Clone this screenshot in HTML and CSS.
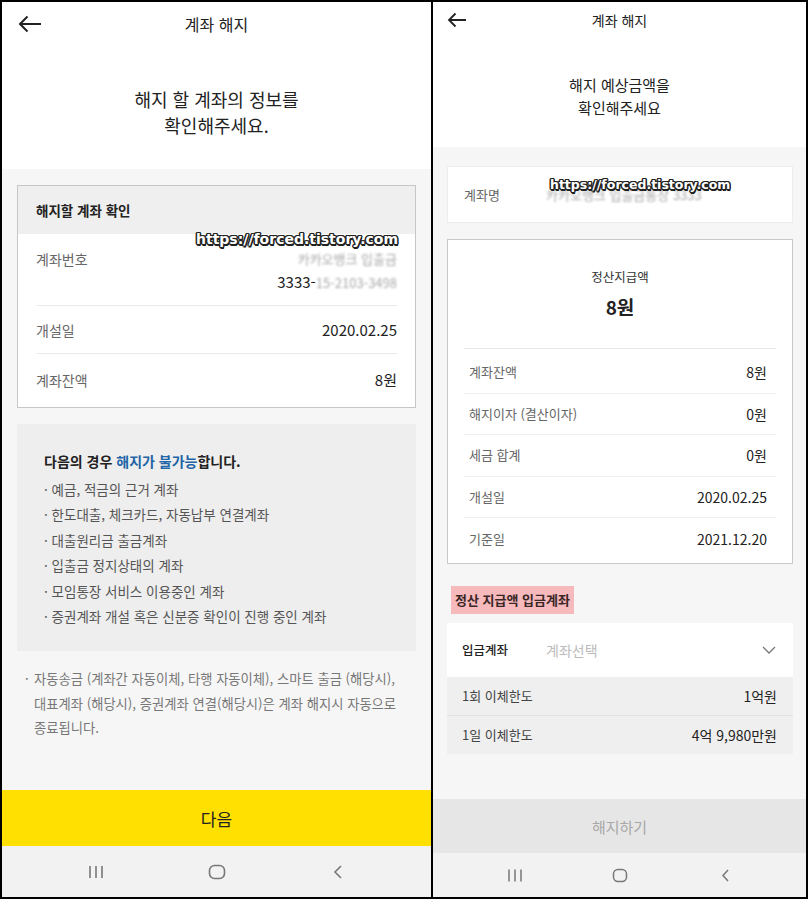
FILE: index.html
```
<!DOCTYPE html>
<html lang="ko">
<head>
<meta charset="UTF-8" />
<meta name="viewport" content="width=device-width, initial-scale=1.0"/>
<title>계좌 해지</title>
<link rel="stylesheet" href="styles.css">
</head>
<body>
<div class="frame">

  <!-- Step 1: account info -->
  <div class="phone phone-left">
    <header class="topbar">
      <svg class="back" width="24" height="18" viewBox="0 0 24 18"><path d="M23 9H2M9.5 1.5L2 9l7.5 7.5" fill="none" stroke="#222" stroke-width="2"/></svg>
      <h1>계좌 해지</h1>
      <span></span>
    </header>
    <div class="intro">해지 할 계좌의 정보를<br>확인해주세요.</div>

    <main class="content">
      <section class="card">
        <div class="card-head">해지할 계좌 확인</div>
        <div class="card-body">
          <div class="row row-top">
            <span class="label">계좌번호</span>
            <span class="value value-stack">
              <span class="blur">카카오뱅크 입출금</span>
              <span>3333-<span class="blur">15-2103-3498</span></span>
            </span>
          </div>
          <div class="row">
            <span class="label">개설일</span>
            <span class="value">2020.02.25</span>
          </div>
          <div class="row">
            <span class="label">계좌잔액</span>
            <span class="value">8원</span>
          </div>
        </div>
        <span class="watermark">https://forced.tistory.com</span>
      </section>

      <section class="notice">
        <h3>다음의 경우 <em>해지가 불가능</em>합니다.</h3>
        <ul>
          <li>예금, 적금의 근거 계좌</li>
          <li>한도대출, 체크카드, 자동납부 연결계좌</li>
          <li>대출원리금 출금계좌</li>
          <li>입출금 정지상태의 계좌</li>
          <li>모임통장 서비스 이용중인 계좌</li>
          <li>증권계좌 개설 혹은 신분증 확인이 진행 중인 계좌</li>
        </ul>
      </section>

      <p class="note"><span class="dot">·</span><span>자동송금 (계좌간 자동이체, 타행 자동이체), 스마트 출금 (해당시),<br>대표계좌 (해당시), 증권계좌 연결(해당시)은 계좌 해지시 자동으로<br>종료됩니다.</span></p>
    </main>

    <button class="cta cta-yellow">다음</button>
    <nav class="navbar">
      <svg width="16" height="16" viewBox="0 0 16 16"><path d="M2 2v12M8 2v12M14 2v12" stroke="#777" stroke-width="1.6"/></svg>
      <svg width="18" height="16" viewBox="0 0 18 16"><rect x="1.5" y="1.5" width="15" height="13" rx="5" fill="none" stroke="#777" stroke-width="1.6"/></svg>
      <svg width="12" height="16" viewBox="0 0 12 16"><path d="M9 2L3 8l6 6" fill="none" stroke="#777" stroke-width="1.6"/></svg>
    </nav>
  </div>

  <!-- Step 2: expected amount -->
  <div class="phone phone-right">
    <header class="topbar">
      <svg class="back" width="20" height="16" viewBox="0 0 20 16"><path d="M19 8H2M8.5 1.5L2 8l6.5 6.5" fill="none" stroke="#222" stroke-width="1.8"/></svg>
      <h1>계좌 해지</h1>
      <span></span>
    </header>
    <div class="intro">해지 예상금액을<br>확인해주세요</div>

    <main class="content">
      <section class="name-box">
        <span class="label">계좌명</span>
        <span class="blur">카카오뱅크 입출금통장 3333</span>
        <span class="watermark">https://forced.tistory.com</span>
      </section>

      <section class="payout">
        <div class="payout-top">
          <p class="payout-title">정산지급액</p>
          <p class="payout-amount">8원</p>
        </div>
        <div class="payout-rows">
          <div class="line"><span class="label">계좌잔액</span><span class="value">8원</span></div>
          <div class="line"><span class="label">해지이자 (결산이자)</span><span class="value">0원</span></div>
          <div class="line"><span class="label">세금 합계</span><span class="value">0원</span></div>
          <div class="line"><span class="label">개설일</span><span class="value">2020.02.25</span></div>
          <div class="line"><span class="label">기준일</span><span class="value">2021.12.20</span></div>
        </div>
      </section>

      <h2 class="mark">정산 지급액 입금계좌</h2>

      <div class="select">
        <span class="select-label">입금계좌</span>
        <span class="select-hint">계좌선택</span>
        <svg width="14" height="8" viewBox="0 0 14 8"><path d="M1 1l6 6 6-6" fill="none" stroke="#777" stroke-width="1.3"/></svg>
      </div>
      <div class="limits">
        <div class="limit"><span>1회 이체한도</span><span class="limit-val">1억원</span></div>
        <div class="limit"><span>1일 이체한도</span><span class="limit-val">4억 9,980만원</span></div>
      </div>
    </main>

    <button class="cta cta-off">해지하기</button>
    <nav class="navbar">
      <svg width="16" height="15" viewBox="0 0 16 15"><path d="M2 1.5v12M8 1.5v12M14 1.5v12" stroke="#777" stroke-width="1.5"/></svg>
      <svg width="16" height="15" viewBox="0 0 16 15"><rect x="1.5" y="1.5" width="13" height="12" rx="4.5" fill="none" stroke="#777" stroke-width="1.5"/></svg>
      <svg width="10" height="15" viewBox="0 0 10 15"><path d="M8 2L3 7.5 8 13" fill="none" stroke="#777" stroke-width="1.5"/></svg>
    </nav>
  </div>

</div>
</body>
</html>
```

FILE: styles.css
```
* {
  box-sizing: border-box;
}
body {
  margin: 0;
  font-family: "Noto Sans CJK KR", "Noto Sans", sans-serif;
  color: #222;
  background: #fff;
}
.frame {
  width: 808px;
  height: 899px;
  border: 2px solid #000;
  display: flex;
}
.phone {
  display: flex;
  flex-direction: column;
  height: 100%;
  background: #fff;
}
.phone-left {
  width: 429px;
}
.phone-right {
  width: 375px;
  border-left: 2px solid #000;
}

/* header */
.topbar {
  display: grid;
  grid-template-columns: 1fr auto 1fr;
  align-items: center;
}
.topbar h1 {
  margin: 0;
  font-weight: 400;
}
.phone-left .topbar {
  height: 44px;
  padding: 0 16px;
}
.phone-left .topbar h1 {
  font-size: 16px;
}
.phone-right .topbar {
  height: 36px;
  padding: 0 14px;
}
.phone-right .topbar h1 {
  font-size: 14px;
}
.intro {
  text-align: center;
}
.phone-left .intro {
  padding: 40px 0 31px;
  font-size: 18px;
  line-height: 26px;
}
.phone-right .intro {
  padding: 35px 0 28px;
  font-size: 15px;
  line-height: 23px;
}

.content {
  flex: 1;
  background: #f6f6f6;
  position: relative;
}
.phone-left .content {
  padding: 16px 15px;
}
.phone-right .content {
  padding: 19px 13px 0 14px;
}

/* left card */
.card {
  position: relative;
  background: #fff;
  border: 1px solid #c6c6c6;
}
.card-head {
  height: 48px;
  line-height: 48px;
  padding-left: 18px;
  background: #efefef;
  font-size: 13.5px;
  font-weight: 700;
}
.card-body {
  padding: 0 18px 2px;
}
.row {
  display: flex;
  justify-content: space-between;
  align-items: center;
  height: 48px;
  border-bottom: 1px solid #ebebeb;
}
.row:last-child {
  height: 51px;
  border-bottom: none;
}
.row-top {
  height: 72px;
  align-items: flex-start;
  padding-top: 13px;
}
.label {
  color: #666;
  font-size: 14px;
  line-height: 24px;
}
.value {
  font-size: 15px;
  color: #222;
}
.value-stack {
  display: flex;
  flex-direction: column;
  align-items: flex-end;
  line-height: 23px;
}
.blur {
  color: #aaa;
  filter: blur(1.3px);
  font-size: 13px;
}
.watermark {
  position: absolute;
  font-family: "DejaVu Sans", sans-serif;
  font-weight: 700;
  color: #fff;
  white-space: nowrap;
  text-shadow: -1.5px 0 #222, 1.5px 0 #222, 0 -1.5px #222, 0 1.5px #222,
    -1px -1px #222, 1px 1px #222, -1px 1px #222, 1px -1px #222, 1px 2px #111;
}
.card .watermark {
  left: 178px;
  top: 45px;
  font-size: 14px;
}

/* notice box */
.notice {
  margin-top: 16px;
  background: #eeeeee;
  padding: 25px 27px 22px;
}
.notice h3 {
  margin: 0 0 4px;
  font-size: 14px;
  line-height: 24px;
  font-weight: 700;
}
.notice em {
  font-style: normal;
  color: #1e64a6;
}
.notice ul {
  list-style: none;
  margin: 0;
  padding: 0;
}
.notice li {
  font-size: 13.5px;
  line-height: 25.4px;
  color: #555;
}
.notice li::before {
  content: "· ";
}
.note {
  display: flex;
  margin: 16px 0 0;
  padding-left: 8px;
  font-size: 13.3px;
  line-height: 24.5px;
  color: #777;
  white-space: nowrap;
}
.note .dot {
  flex: 0 0 9px;
}

/* bottom buttons */
.cta {
  border: none;
  font-family: inherit;
  width: 100%;
  padding: 0;
}
.cta-yellow {
  height: 56px;
  background: #ffe000;
  color: #222;
  font-size: 17px;
}
.cta-off {
  height: 54px;
  background: #e6e6e6;
  color: #a8a8a8;
  font-size: 15px;
}
.navbar {
  display: grid;
  justify-content: center;
  justify-items: center;
  align-items: center;
  background: #f2f2f2;
}
.phone-left .navbar {
  height: 51px;
  grid-template-columns: repeat(3, 121px);
}
.phone-right .navbar {
  height: 44px;
  grid-template-columns: repeat(3, 105px);
}

/* right: account name */
.name-box {
  position: relative;
  display: flex;
  align-items: center;
  height: 57px;
  padding-left: 16px;
  background: #fff;
  border: 1px solid #ededed;
}
.name-box .label {
  font-size: 13px;
  width: 82px;
}
.name-box .watermark {
  left: 102px;
  top: 10px;
  font-size: 12.5px;
}

/* right: payout card */
.payout {
  margin-top: 16px;
  background: #fff;
  border: 1px solid #c9c9c9;
  padding: 0 16px 3px;
}
.payout-top {
  text-align: center;
  padding: 27px 0 26px;
  border-bottom: 1px solid #e6e6e6;
}
.payout-title {
  margin: 0;
  font-size: 12.5px;
  line-height: 20px;
  color: #333;
}
.payout-amount {
  margin: 5px 0 0;
  font-size: 19px;
  line-height: 30px;
  font-weight: 700;
}
.payout-rows {
  padding-top: 3px;
}
.line {
  display: flex;
  justify-content: space-between;
  align-items: center;
  height: 41.5px;
  padding: 0 9px 0 5px;
  border-bottom: 1px solid #efefef;
}
.line:last-child {
  border-bottom: none;
}
.line .label {
  font-size: 13px;
}
.line .value {
  font-size: 14px;
}

.mark {
  display: inline-block;
  margin: 22px 0 0 4px;
  padding: 0 4px;
  background: #f6b9bc;
  color: #3a2626;
  font-size: 13px;
  line-height: 28px;
  font-weight: 700;
}
.select {
  display: flex;
  align-items: center;
  height: 54px;
  margin-top: 9px;
  padding: 0 17px 0 15px;
  background: #fff;
}
.select-label {
  width: 84px;
  font-size: 12.5px;
  font-weight: 500;
}
.select-hint {
  flex: 1;
  font-size: 14px;
  color: #bcbcbc;
}
.limits {
  background: #efefef;
}
.limit {
  display: flex;
  justify-content: space-between;
  align-items: center;
  height: 38.5px;
  padding: 0 16px 0 15px;
  font-size: 13px;
  color: #444;
}
.limit + .limit {
  border-top: 1px solid #e2e2e2;
}
.limit-val {
  font-size: 14px;
  color: #222;
}
```
